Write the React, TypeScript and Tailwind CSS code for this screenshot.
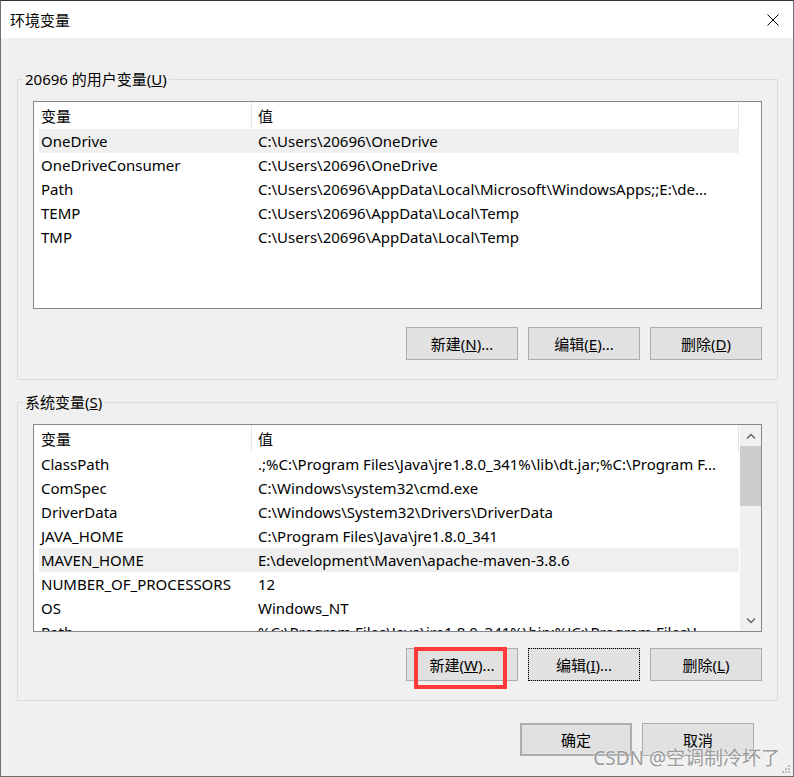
import type { ReactNode } from 'react'

type Row = { name: string; value: string }

const userVars: Row[] = [
  { name: 'OneDrive', value: 'C:\\Users\\20696\\OneDrive' },
  { name: 'OneDriveConsumer', value: 'C:\\Users\\20696\\OneDrive' },
  { name: 'Path', value: 'C:\\Users\\20696\\AppData\\Local\\Microsoft\\WindowsApps;;E:\\de...' },
  { name: 'TEMP', value: 'C:\\Users\\20696\\AppData\\Local\\Temp' },
  { name: 'TMP', value: 'C:\\Users\\20696\\AppData\\Local\\Temp' },
]

const sysVars: Row[] = [
  { name: 'ClassPath', value: '.;%C:\\Program Files\\Java\\jre1.8.0_341%\\lib\\dt.jar;%C:\\Program F...' },
  { name: 'ComSpec', value: 'C:\\Windows\\system32\\cmd.exe' },
  { name: 'DriverData', value: 'C:\\Windows\\System32\\Drivers\\DriverData' },
  { name: 'JAVA_HOME', value: 'C:\\Program Files\\Java\\jre1.8.0_341' },
  { name: 'MAVEN_HOME', value: 'E:\\development\\Maven\\apache-maven-3.8.6' },
  { name: 'NUMBER_OF_PROCESSORS', value: '12' },
  { name: 'OS', value: 'Windows_NT' },
  { name: 'Path', value: '%C:\\Program Files\\Java\\jre1.8.0_341%\\bin;%JC:\\Program Files\\J...' },
]

function Chevron({ up }: { up?: boolean }) {
  return (
    <svg width="10" height="6" viewBox="0 0 10 6" className={up ? '' : 'rotate-180'}>
      <path d="M1 5.5 L5 1.5 L9 5.5" fill="none" stroke="#606060" strokeWidth="1.4" />
    </svg>
  )
}

function ListView({ rows, selected, scroll }: { rows: Row[]; selected: number; scroll?: boolean }) {
  return (
    <div className="flex h-[208px] overflow-hidden border border-[#828790] bg-white">
      <div className="min-w-0 flex-1 pl-[5px]">
        <div className="flex h-[27px] w-[700px]">
          <div className="flex w-[213px] items-center border-r border-[#e5e5e5] pl-[2px] pt-[1px]">变量</div>
          <div className="flex w-[487px] items-center border-r border-[#e5e5e5] pl-[6px] pt-[1px]">值</div>
        </div>
        {rows.map((r, i) => (
          <div
            key={r.name + i}
            className={`flex h-[24px] w-[700px] items-center whitespace-nowrap ${i === selected ? 'bg-[#efefef]' : ''}`}
          >
            <div className="w-[213px] overflow-hidden pl-[2px]">{r.name}</div>
            <div className="w-[487px] overflow-hidden pl-[6px]">{r.value}</div>
          </div>
        ))}
      </div>
      {scroll && (
        <div className="flex w-[21px] flex-col bg-[#f0f0f0]">
          <div className="flex h-[21px] items-center justify-center">
            <Chevron up />
          </div>
          <div className="h-[60px] bg-[#cdcdcd]" />
          <div className="flex-1" />
          <div className="flex h-[21px] items-center justify-center">
            <Chevron />
          </div>
        </div>
      )}
    </div>
  )
}

function Button({ children, className = '' }: { children: ReactNode; className?: string }) {
  return (
    <button className={`flex h-[33px] w-[112px] items-center justify-center border border-[#adadad] bg-[#e1e1e1] ${className}`}>
      {children}
    </button>
  )
}

function Group({ label, children }: { label: ReactNode; children: ReactNode }) {
  return (
    <fieldset className="border border-[#dcdcdc]">
      <legend className="ml-[5px] px-[2px] leading-[20px]">{label}</legend>
      <div className="px-[15px] pb-[19px] pt-[12px]">{children}</div>
    </fieldset>
  )
}

export default function App() {
  return (
    <div className="relative flex h-[777px] w-[794px] flex-col border border-[#707070] border-t-[#2b3641] bg-[#f0f0f0] text-[15px] leading-[20px] text-black [font-family:'Noto_Sans','Noto_Sans_CJK_SC',sans-serif]">
      <div className="flex h-[37px] items-center justify-between bg-white pl-[9px] pr-[14px]">
        <span>环境变量</span>
        <svg width="12" height="12" viewBox="0 0 12 12">
          <path d="M0.5 0.5 L11.5 11.5 M11.5 0.5 L0.5 11.5" stroke="#000" strokeWidth="1" />
        </svg>
      </div>

      <div className="flex flex-col pl-[16px] pr-[15px] pt-[31px]">
        <Group label={<>20696 的用户变量(<u>U</u>)</>}>
          <ListView rows={userVars} selected={0} />
          <div className="mt-[18px] flex justify-end gap-[10px]">
            <Button>新建(<u>N</u>)...</Button>
            <Button>编辑(<u>E</u>)...</Button>
            <Button>删除(<u>D</u>)</Button>
          </div>
        </Group>

        <div className="mt-[12px]">
          <Group label={<>系统变量(<u>S</u>)</>}>
            <ListView rows={sysVars} selected={4} scroll />
            <div className="mt-[16px] flex justify-end gap-[10px]">
              <div className="relative">
                <Button>新建(<u>W</u>)...</Button>
                <span className="absolute -top-[1px] left-[8px] h-[42px] w-[93px] border-4 border-[#fc3a3a]" />
              </div>
              <Button className="outline outline-1 -outline-offset-1 outline-dotted outline-black">编辑(<u>I</u>)...</Button>
              <Button>删除(<u>L</u>)</Button>
            </div>
          </Group>
        </div>

        <div className="mr-[24px] mt-[22px] flex justify-end gap-[10px]">
          <Button className="w-[110px] border-2 border-[#0078d7]">确定</Button>
          <Button className="w-[111px]">取消</Button>
        </div>
      </div>

      <span className="absolute bottom-[7px] right-[13px] text-[19px] leading-[22px] text-[#9a9a9a] [text-shadow:0_0_2px_#fff]">
        CSDN @空调制冷坏了
      </span>
      <svg className="absolute bottom-[3px] right-[3px]" width="9" height="9" viewBox="0 0 9 9">
        <g fill="#bcbcbc">
          <rect x="7" y="1" width="2" height="2" />
          <rect x="4" y="4" width="2" height="2" />
          <rect x="7" y="4" width="2" height="2" />
          <rect x="1" y="7" width="2" height="2" />
          <rect x="4" y="7" width="2" height="2" />
          <rect x="7" y="7" width="2" height="2" />
        </g>
      </svg>
    </div>
  )
}
